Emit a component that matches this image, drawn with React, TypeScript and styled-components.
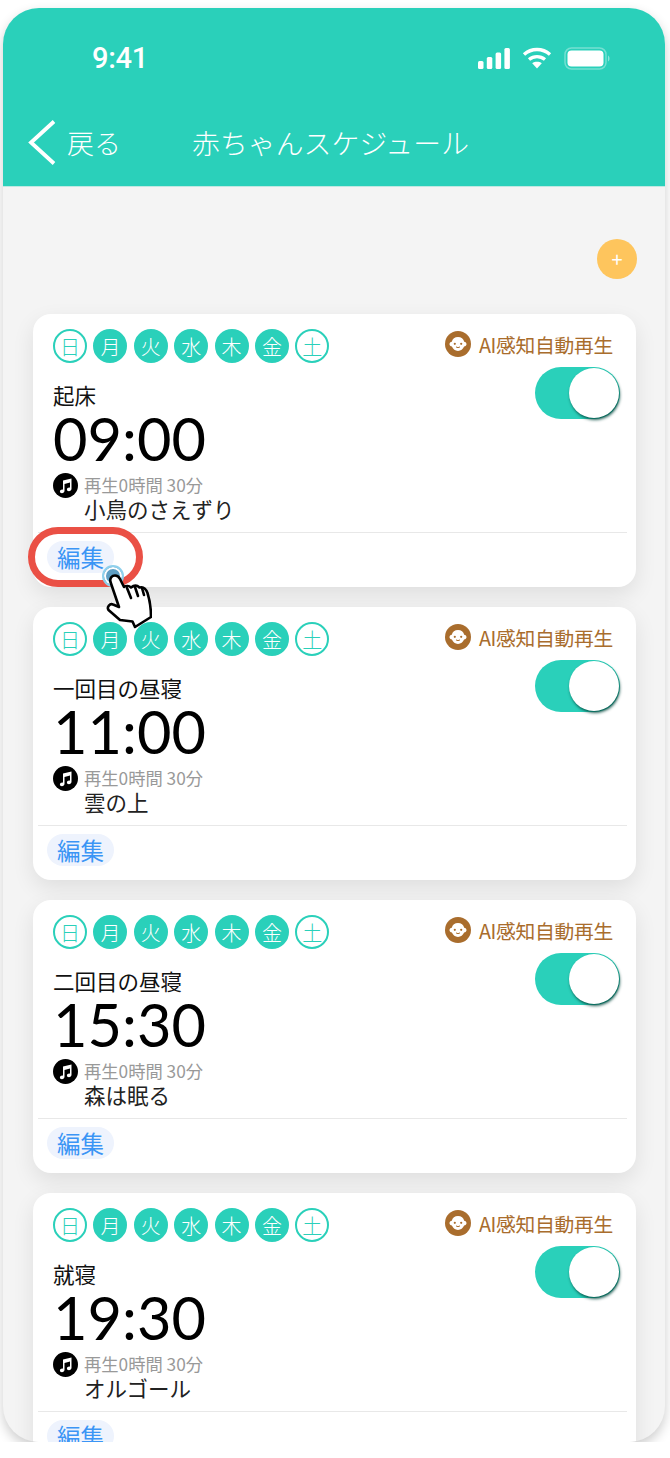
import styled, { createGlobalStyle } from "styled-components";

const TEAL = "#2ad0ba";
const FONT = `"Noto Sans CJK JP", "Noto Sans", sans-serif`;

const GlobalStyle = createGlobalStyle`
  html, body {
    margin: 0;
    padding: 0;
    background: #fff;
    font-family: ${FONT};
  }
`;

const days = [
  { label: "日", active: false },
  { label: "月", active: true },
  { label: "火", active: true },
  { label: "水", active: true },
  { label: "木", active: true },
  { label: "金", active: true },
  { label: "土", active: false },
];

const schedules = [
  { id: 1, title: "起床", time: "09:00", song: "小鳥のさえずり", highlighted: true },
  { id: 2, title: "一回目の昼寝", time: "11:00", song: "雲の上", highlighted: false },
  { id: 3, title: "二回目の昼寝", time: "15:30", song: "森は眠る", highlighted: false },
  { id: 4, title: "就寝", time: "19:30", song: "オルゴール", highlighted: false },
];

const SignalIcon = () => (
  <svg width="32" height="21" viewBox="0 0 32 21" fill="#fff">
    <rect x="0" y="13" width="5.5" height="8" rx="1.5" />
    <rect x="8.800" y="9" width="5.500" height="12" rx="1.5" />
    <rect x="17.600" y="4.500" width="5.500" height="16.500" rx="1.5" />
    <rect x="26.400" y="0" width="5.500" height="21" rx="1.5" />
  </svg>
);

const WifiIcon = () => (
  <svg width="30" height="22" viewBox="0 0 30 22" fill="none" stroke="#fff" strokeWidth="3.4">
    <path d="M2 7.500C9.500 0.800 20.500 0.800 28 7.500" />
    <path d="M7 12.500C11.800 8.600 18.200 8.600 23 12.500" />
    <path d="M15 21.500L10.200 16.200C13 14.300 17 14.300 19.800 16.200Z" fill="#fff" stroke="none" />
  </svg>
);

const BatteryIcon = () => (
  <svg width="46" height="23" viewBox="0 0 46 23" fill="none">
    <rect x="1" y="1" width="41" height="21" rx="6.500" stroke="#fff" strokeOpacity=".35" strokeWidth="1.500" />
    <rect x="3.500" y="3.500" width="36" height="16" rx="4" fill="#fff" />
    <path d="M44 8.500c1 .5 1.500 1.700 1.500 3s-.5 2.500-1.500 3z" fill="#fff" fillOpacity=".45" />
  </svg>
);

const BackIcon = () => (
  <svg width="28" height="45" viewBox="0 0 28 45" fill="none" stroke="#fff" strokeWidth="3.800">
    <path d="M26 1.500L3 22.500L26 43.500" />
  </svg>
);

const BabyIcon = () => (
  <svg width="26" height="26" viewBox="0 0 26 26">
    <circle cx="13" cy="13" r="13" fill="#a96d2d" />
    <path d="M13 6c3.200 0 5.600 2 6.200 4.800c1.400.3 2.300 1.200 2.300 2.400s-1 2.200-2.400 2.400C18 18.200 15.800 20 13 20s-5-1.800-6.100-4.400C5.500 15.400 4.500 14.400 4.500 13.200s.9-2.100 2.300-2.400C7.400 8 9.800 6 13 6z" fill="#fff" />
    <circle cx="9.800" cy="12.800" r="1.100" fill="#a96d2d" />
    <circle cx="16.200" cy="12.800" r="1.100" fill="#a96d2d" />
    <path d="M11 15.800c1.200 1 2.800 1 4 0" stroke="#a96d2d" strokeWidth="1" fill="none" />
  </svg>
);

const MusicIcon = () => (
  <svg width="25" height="25" viewBox="0 0 25 25">
    <circle cx="12.500" cy="12.500" r="12.500" fill="#000" />
    <path
      d="M10 7.500L18.500 5.500V15.800C18.500 17.200 17.300 18.200 15.900 18.200C14.700 18.200 13.900 17.500 13.900 16.500C13.900 15.400 15 14.600 16.200 14.600C16.500 14.600 16.800 14.650 17 14.750V9.600L11.500 10.900V17.800C11.500 19.200 10.300 20.200 8.900 20.200C7.700 20.200 6.900 19.500 6.900 18.500C6.900 17.400 8 16.600 9.200 16.600C9.500 16.600 9.800 16.650 10 16.750Z"
      fill="#fff"
    />
  </svg>
);

const HandIcon = () => (
  <svg width="46" height="55" viewBox="-1 -1 46 55" fill="#fff" stroke="#000" strokeWidth="2.600" strokeLinejoin="round" strokeLinecap="round">
    <path d="M3.500 7C2.500 3 5 .5 8 .5C10.500.5 12 2 13 4L17 12C19 10.500 22 10.500 24 12.500C27 10 30 10 32.500 12.500C36 11.500 39 14 40.500 18C43 26 44 34 44 42L28 52L25.500 46.500L13 45L1.500 35C-.5 32 3 28 6 29.500L12 32Z" />
    <path d="M20 13L24 23M28 12L31 21M35 13L37 20" fill="none" />
  </svg>
);

const App = () => {
  return (
    <>
      <GlobalStyle />
      <Phone>
        <Header>
          <StatusBar>
            <Clock>9:41</Clock>
            <StatusIcons>
              <SignalIcon />
              <WifiIcon />
              <BatteryIcon />
            </StatusIcons>
          </StatusBar>
          <NavBar>
            <BackIcon />
            <BackLabel>戻る</BackLabel>
            <NavTitle>赤ちゃんスケジュール</NavTitle>
          </NavBar>
        </Header>
        <Content>
          <AddRow>
            <AddButton>+</AddButton>
          </AddRow>
          <CardList>
            {schedules.map((item) => (
              <Card key={item.id}>
                <CardTop>
                  <DayRow>
                    {days.map((day) => (
                      <DayBadge key={day.label} $active={day.active}>
                        {day.label}
                      </DayBadge>
                    ))}
                  </DayRow>
                  <AiLabel>
                    <BabyIcon />
                    <span>AI感知自動再生</span>
                  </AiLabel>
                </CardTop>
                <CardMain>
                  <div>
                    <ScheduleTitle>{item.title}</ScheduleTitle>
                    <ScheduleTime>{item.time}</ScheduleTime>
                    <SongRow>
                      <MusicIcon />
                      <div>
                        <Duration>再生0時間 30分</Duration>
                        <SongName>{item.song}</SongName>
                      </div>
                    </SongRow>
                  </div>
                  <Toggle>
                    <Knob />
                  </Toggle>
                </CardMain>
                <CardFooter>
                  <EditButton>
                    編集
                    {item.highlighted && (
                      <>
                        <Highlight />
                        <TapDot />
                        <Hand>
                          <HandIcon />
                        </Hand>
                      </>
                    )}
                  </EditButton>
                </CardFooter>
              </Card>
            ))}
          </CardList>
        </Content>
      </Phone>
    </>
  );
};

const Phone = styled.div`
  width: 662px;
  height: 1434px;
  margin: 8px 0 0 3px;
  border-radius: 36px;
  overflow: hidden;
  background: #f4f4f4;
  box-shadow: 0 5px 12px rgba(0, 0, 0, 0.2);
`;

const Header = styled.header`
  height: 179px;
  background: ${TEAL};
  border-bottom: 1px solid #bfe9e2;
  box-sizing: border-box;
  color: #fff;
`;

const StatusBar = styled.div`
  display: flex;
  justify-content: space-between;
  align-items: center;
  height: 36px;
  padding: 32px 55px 0 89px;
`;

const Clock = styled.span`
  font-family: "Roboto", sans-serif;
  font-size: 29px;
  font-weight: 500;
  letter-spacing: -0.3px;
`;

const StatusIcons = styled.div`
  display: flex;
  align-items: center;
  gap: 12px;
`;

const NavBar = styled.nav`
  display: flex;
  align-items: center;
  height: 45px;
  margin-top: 44px;
  padding-left: 25px;
`;

const BackLabel = styled.span`
  margin-left: 11px;
  font-size: 27px;
  line-height: 45px;
  font-weight: 300;
`;

const NavTitle = styled.span`
  margin-left: 71px;
  font-size: 27.800px;
  letter-spacing: 0.1px;
  line-height: 45px;
  font-weight: 300;
`;

const Content = styled.main`
  padding: 52px 29px 0 30px;
`;

const AddRow = styled.div`
  display: flex;
  justify-content: flex-end;
  margin-bottom: 35px;
`;

const AddButton = styled.div`
  width: 40px;
  height: 40px;
  margin-right: -1px;
  border-radius: 50%;
  display: flex;
  align-items: center;
  justify-content: center;
  background: #fec55d;
  color: #fff;
  font-size: 20px;
  line-height: 1;
`;

const CardList = styled.div`
  display: flex;
  flex-direction: column;
  gap: 20px;
`;

const Card = styled.section`
  background: #fff;
  border-radius: 18px;
  height: 273px;
  padding-top: 15px;
  box-sizing: border-box;
  box-shadow: 0 8px 22px rgba(0, 0, 0, 0.09);
  flex-shrink: 0;
`;

const CardTop = styled.div`
  display: flex;
  justify-content: space-between;
  align-items: center;
  padding: 0 23px 0 20px;
  height: 34px;
`;

const DayRow = styled.div`
  display: flex;
  gap: 6.400px;
`;

const DayBadge = styled.div<{ $active: boolean }>`
  width: 34px;
  height: 34px;
  box-sizing: border-box;
  border-radius: 50%;
  display: flex;
  align-items: center;
  justify-content: center;
  font-size: 20px;
  font-weight: 300;
  border: 2px solid ${TEAL};
  color: ${({ $active }) => ($active ? "#fff" : TEAL)};
  background: ${({ $active }) => ($active ? TEAL : "#fff")};
`;

const AiLabel = styled.div`
  display: flex;
  align-items: center;
  gap: 8px;
  margin-top: -4px;
  color: #a96d2d;
  font-size: 19.800px;
  letter-spacing: -0.3px;
`;

const CardMain = styled.div`
  display: flex;
  justify-content: space-between;
  align-items: flex-start;
  height: 170px;
  padding: 4px 7px 0 15px;
  box-sizing: border-box;
  border-bottom: 1px solid #e8e8e8;
  margin: 0 9px 0 5px;
`;

const ScheduleTitle = styled.div`
  margin-top: 14px;
  font-size: 21.500px;
  line-height: 28px;
  color: #111;
`;

const ScheduleTime = styled.div`
  font-family: "Lato", sans-serif;
  font-size: 59.500px;
  line-height: 56px;
  margin-top: 1px;
  color: #000;
`;

const SongRow = styled.div`
  display: flex;
  gap: 6px;
  margin-top: 7px;
`;

const Duration = styled.div`
  font-size: 17.300px;
  line-height: 24px;
  color: #999;
`;

const SongName = styled.div`
  font-size: 21.500px;
  line-height: 24px;
  color: #222;
`;

const Toggle = styled.div`
  display: flex;
  justify-content: flex-end;
  align-items: center;
  width: 85px;
  height: 52px;
  border-radius: 26px;
  background: ${TEAL};
`;

const Knob = styled.div`
  width: 50px;
  height: 50px;
  margin-right: 1px;
  border-radius: 50%;
  background: #fff;
  box-shadow: 1px 2px 3px rgba(0, 70, 60, 0.85);
`;

const CardFooter = styled.div`
  padding: 8px 0 0 14px;
`;

const EditButton = styled.div`
  position: relative;
  display: inline-flex;
  align-items: center;
  justify-content: center;
  width: 67px;
  height: 32px;
  border-radius: 16px;
  background: #eef3fd;
  color: #3b95f5;
  font-size: 23.500px;
  line-height: 32px;
`;

const Highlight = styled.span`
  position: absolute;
  left: -19px;
  top: -14px;
  width: 115px;
  height: 60px;
  box-sizing: border-box;
  border: 7px solid #ea5045;
  border-radius: 30px;
`;

const TapDot = styled.span`
  position: absolute;
  left: 55px;
  top: 24px;
  width: 22px;
  height: 22px;
  box-sizing: border-box;
  border-radius: 50%;
  border: 2px solid #8fd0ec;
  background: #5f9fc4;
  box-shadow: inset 0 0 0 2px #fff;
`;

const Hand = styled.span`
  position: absolute;
  left: 59px;
  top: 33px;
  display: flex;
`;

export default App;
